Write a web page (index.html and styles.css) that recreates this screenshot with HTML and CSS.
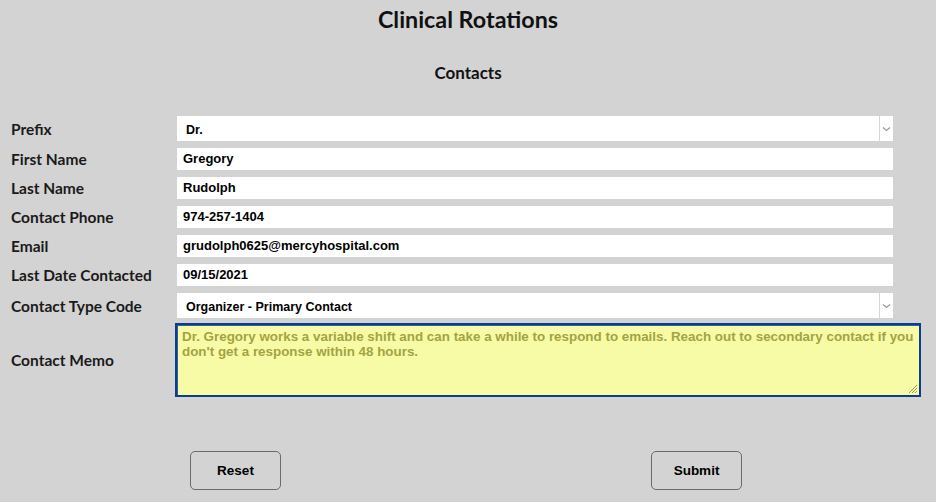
FILE: index.html
```html
<!DOCTYPE html>
<html>
<head>
<meta charset="utf-8">
<title>Clinical Rotations</title>
<link rel="stylesheet" href="styles.css">
</head>
<body>
<h1 class="title">Clinical Rotations</h1>
<h2 class="subtitle">Contacts</h2>
<form class="form">
  <div class="row">
    <label class="label">Prefix</label>
    <div class="select">
      <span class="select-value">Dr.</span>
      <span class="select-arrow"><svg width="9" height="6" viewBox="0 0 9 6"><path d="M1 1.5 L4.5 4.5 L8 1.5" fill="none" stroke="#9a9a9a" stroke-width="1.2"/></svg></span>
    </div>
  </div>
  <div class="row">
    <label class="label">First Name</label>
    <div class="input">Gregory</div>
  </div>
  <div class="row">
    <label class="label">Last Name</label>
    <div class="input">Rudolph</div>
  </div>
  <div class="row">
    <label class="label">Contact Phone</label>
    <div class="input">974-257-1404</div>
  </div>
  <div class="row">
    <label class="label">Email</label>
    <div class="input">grudolph0625@mercyhospital.com</div>
  </div>
  <div class="row">
    <label class="label">Last Date Contacted</label>
    <div class="input">09/15/2021</div>
  </div>
  <div class="row">
    <label class="label">Contact Type Code</label>
    <div class="select">
      <span class="select-value">Organizer - Primary Contact</span>
      <span class="select-arrow"><svg width="9" height="6" viewBox="0 0 9 6"><path d="M1 1.5 L4.5 4.5 L8 1.5" fill="none" stroke="#9a9a9a" stroke-width="1.2"/></svg></span>
    </div>
  </div>
  <div class="row row-memo">
    <label class="label">Contact Memo</label>
    <div class="memo">Dr. Gregory works a variable shift and can take a while to respond to emails. Reach out to secondary contact if you don't get a response within 48 hours.<svg class="grip" width="11" height="11" viewBox="0 0 11 11"><path d="M10 2 L2 10 M10 5 L5 10 M10 8 L8 10" stroke="#9a9a70" stroke-width="1"/></svg></div>
  </div>
  <div class="buttons">
    <div class="btn-cell"><span class="btn">Reset</span></div>
    <div class="btn-cell"><span class="btn">Submit</span></div>
  </div>
</form>
</body>
</html>
```
FILE: styles.css
```css
html, body {
  margin: 0;
  padding: 0;
  background: #d3d3d3;
}
body {
  width: 936px;
  height: 502px;
  overflow: hidden;
  font-family: "Lato", "Liberation Sans", sans-serif;
  color: #111;
}
.title {
  margin: 0;
  padding-top: 6px;
  height: 30px;
  text-align: center;
  font-size: 23.3px;
  font-weight: 700;
  line-height: 26px;
}
.subtitle {
  margin: 0;
  padding-top: 27px;
  text-align: center;
  font-size: 17px;
  font-weight: 700;
  line-height: 19px;
}
.form {
  margin-top: 34px;
  padding-left: 11px;
  display: flex;
  flex-direction: column;
  gap: 7px;
}
.row {
  display: flex;
  align-items: center;
}
.label {
  width: 166px;
  flex: none;
  font-size: 15.5px;
  font-weight: 700;
  color: #1a1a1a;
}
.input {
  width: 710px;
  height: 22px;
  background: #fff;
  padding-left: 6px;
  font-family: "Liberation Sans", Arial, sans-serif;
  font-weight: 700;
  font-size: 13px;
  line-height: 22px;
  color: #000;
}
.select {
  width: 716px;
  height: 25px;
  background: #fff;
  display: flex;
}
.select-value {
  flex: 1;
  padding-left: 9px;
  font-family: "Liberation Sans", Arial, sans-serif;
  font-weight: 700;
  font-size: 12.5px;
  line-height: 28px;
  color: #000;
}
.select-arrow {
  width: 13px;
  border-left: 1px solid #d6d6d6;
  display: flex;
  align-items: center;
  justify-content: center;
}
.row-memo {
  margin-top: -2px;
}
.memo {
  position: relative;
  margin-left: -2px;
  width: 734px;
  height: 66px;
  padding: 4px 3px 0 5px;
  background: #f8fba6;
  border: 2px solid #0b3e86;
  box-shadow: inset 1px 1px 0 #2a5fb0;
  font-family: "Liberation Sans", Arial, sans-serif;
  font-weight: 700;
  font-size: 13.4px;
  line-height: 15px;
  color: #a3a343;
}
.grip {
  position: absolute;
  right: 1px;
  bottom: 1px;
}
.buttons {
  margin-top: 47px;
  margin-left: -6px;
  width: 922px;
  display: grid;
  grid-template-columns: 1fr 1fr;
}
.btn-cell {
  display: flex;
  justify-content: center;
}
.btn {
  width: 89px;
  height: 37px;
  border: 1px solid #6b6b6b;
  border-radius: 5px;
  display: flex;
  align-items: center;
  justify-content: center;
  font-family: "Liberation Sans", Arial, sans-serif;
  font-weight: 700;
  font-size: 13.5px;
  color: #000;
}
```
